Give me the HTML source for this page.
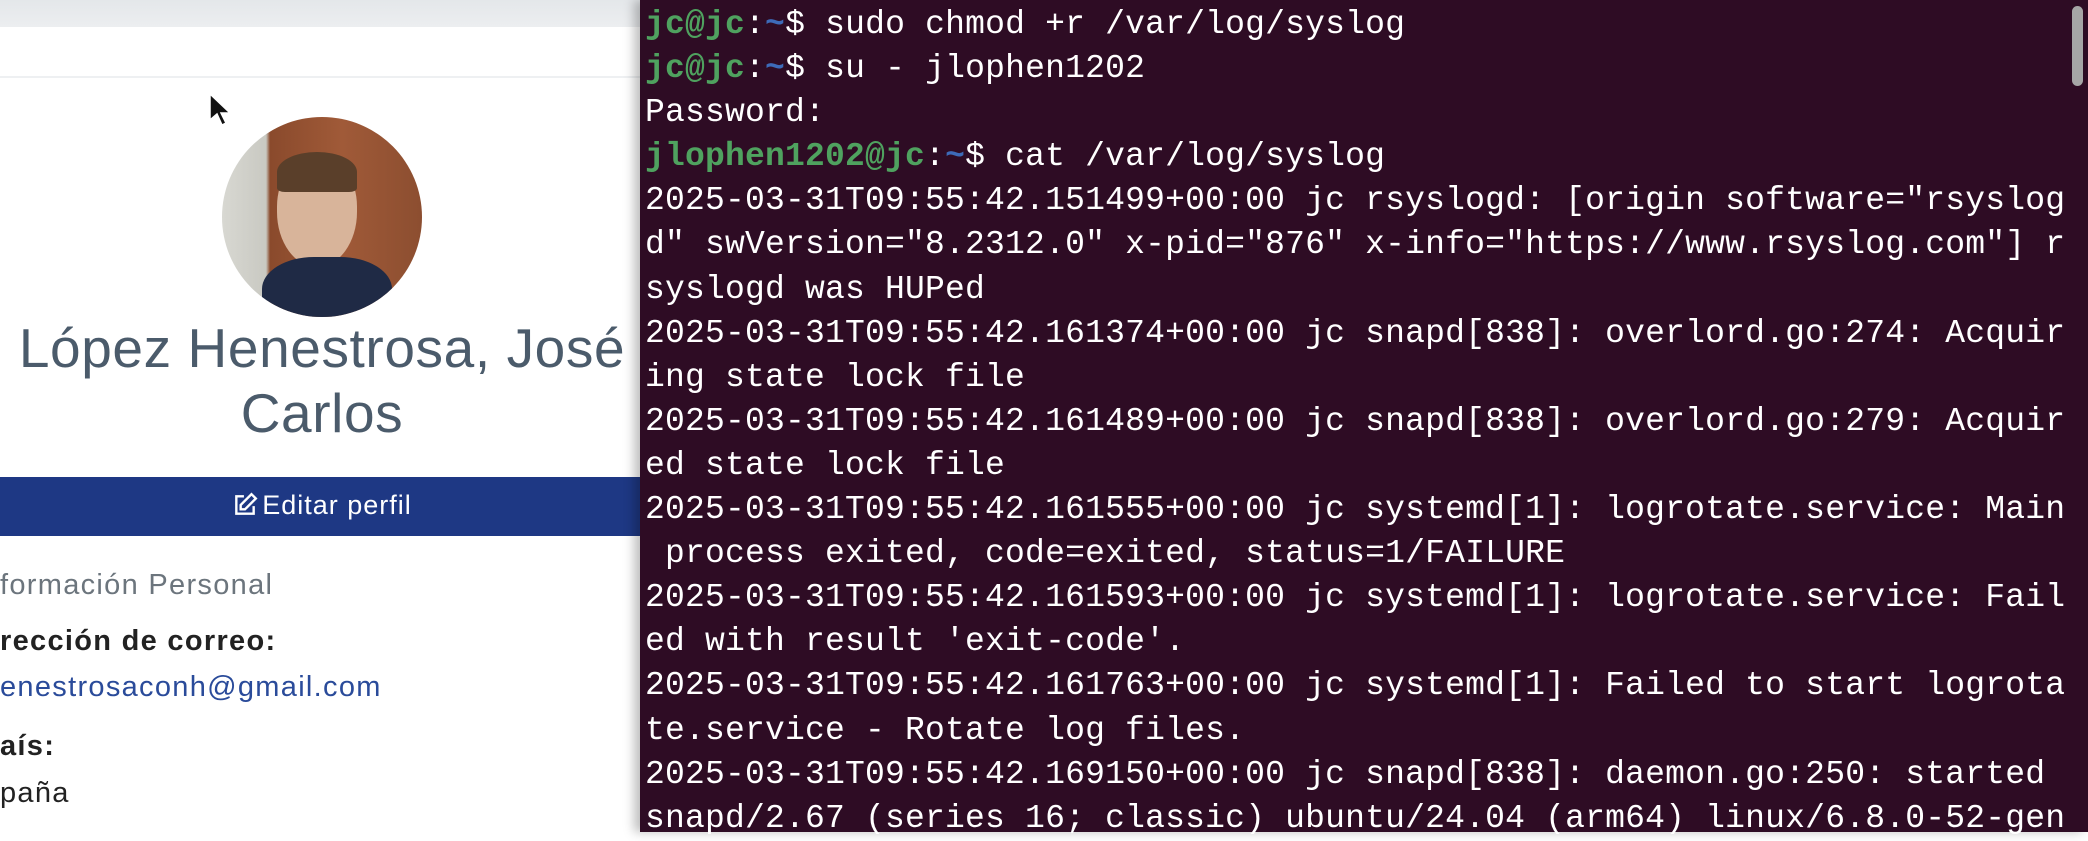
<!DOCTYPE html>
<html><head><meta charset="utf-8"><style>
body{margin:0;width:2088px;height:832px;overflow:hidden;background:#fff;position:relative;font-family:"Liberation Sans",sans-serif}
.l{position:absolute;left:0;top:0;width:640px;height:832px;background:#fff;overflow:hidden}
.tb{position:absolute;left:0;top:0;width:640px;height:27px;background:linear-gradient(#e4e7ea,#eceef0)}
.hr{position:absolute;left:0;top:76px;width:640px;height:2px;background:#eef0f2}
.av{position:absolute;left:222px;top:117px;width:200px;height:200px;border-radius:50%;overflow:hidden;background:linear-gradient(90deg,#d8d8d2 0,#c9c9c2 22%,#8a4a2c 24%,#a05a38 60%,#8c4e30 100%)}
.t{position:absolute;white-space:nowrap}
.s{font-size:29px;letter-spacing:1.3px}
.blue{position:absolute;left:0;top:477px;width:640px;height:59px;background:#1e3884}
.term{position:absolute;left:640px;top:0;width:1448px;height:832px;background:#2e0c24;box-shadow:-6px 0 10px rgba(0,0,0,.25)}
pre{margin:0;position:absolute;left:5px;top:3px;font-family:"Liberation Mono","DejaVu Sans Mono",monospace;font-size:33px;line-height:44.1px;letter-spacing:0.2px;color:#fff}
.g{color:#4fa25f;font-weight:bold}.b{color:#3d6bb8;font-weight:bold}
.sb{position:absolute;left:1432px;top:6px;width:11px;height:80px;border-radius:6px;background:#a6a6a6}
</style></head><body>
<div class="l">
<div class="tb"></div><div class="hr"></div>
<div class="av">
 <div style="position:absolute;left:55px;top:40px;width:80px;height:110px;border-radius:45% 45% 50% 50%;background:#d8b49a"></div>
 <div style="position:absolute;left:55px;top:35px;width:80px;height:40px;border-radius:50% 50% 10% 10%;background:#5a3f2a"></div>
 <div style="position:absolute;left:40px;top:140px;width:130px;height:80px;border-radius:40% 40% 0 0;background:#1f2a45"></div>
</div>
<div class="t" style="left:0;width:644px;text-align:center;top:316px;font-size:55px;letter-spacing:0.6px;color:#4b5b6b">López Henestrosa, José</div>
<div class="t" style="left:0;width:644px;text-align:center;top:381px;font-size:55px;letter-spacing:0.6px;color:#4b5b6b">Carlos</div>
<div class="blue"></div>
<div class="t" style="left:0;width:644px;text-align:center;top:490px;font-size:27px;letter-spacing:1px;color:#fff"><svg width="26" height="26" viewBox="0 0 24 24" style="vertical-align:-4px;margin-right:4px" fill="none" stroke="#fff" stroke-width="2.2"><path d="M11 4H4v16h16v-7"/><path d="M18 2l4 4-10 10H8v-4z"/></svg>Editar perfil</div>
<div class="t s" style="left:0;top:569px;color:#6c757d">formación Personal</div>
<div class="t s" style="left:0;top:625px;color:#222;font-weight:bold">rección de correo:</div>
<div class="t s" style="left:0;top:671px;color:#2a4b9a">enestrosaconh@gmail.com</div>
<div class="t s" style="left:0;top:730px;color:#222;font-weight:bold">aís:</div>
<div class="t s" style="left:0;top:777px;color:#222">paña</div>
<svg style="position:absolute;left:208px;top:92px" width="24" height="36" viewBox="0 0 24 36"><path d="M2 2v26l7-6 5 11 4-2-5-10h9z" fill="#111" stroke="#fff" stroke-width="1.5"/></svg>
</div>
<div class="term"><div class="sb"></div>
<pre><span class="g">jc@jc</span>:<span class="b">~</span>$ sudo chmod +r /var/log/syslog
<span class="g">jc@jc</span>:<span class="b">~</span>$ su - jlophen1202
Password:
<span class="g">jlophen1202@jc</span>:<span class="b">~</span>$ cat /var/log/syslog
2025-03-31T09:55:42.151499+00:00 jc rsyslogd: [origin software="rsyslog
d" swVersion="8.2312.0" x-pid="876" x-info="https://www.rsyslog.com"] r
syslogd was HUPed
2025-03-31T09:55:42.161374+00:00 jc snapd[838]: overlord.go:274: Acquir
ing state lock file
2025-03-31T09:55:42.161489+00:00 jc snapd[838]: overlord.go:279: Acquir
ed state lock file
2025-03-31T09:55:42.161555+00:00 jc systemd[1]: logrotate.service: Main
 process exited, code=exited, status=1/FAILURE
2025-03-31T09:55:42.161593+00:00 jc systemd[1]: logrotate.service: Fail
ed with result 'exit-code'.
2025-03-31T09:55:42.161763+00:00 jc systemd[1]: Failed to start logrota
te.service - Rotate log files.
2025-03-31T09:55:42.169150+00:00 jc snapd[838]: daemon.go:250: started
snapd/2.67 (series 16; classic) ubuntu/24.04 (arm64) linux/6.8.0-52-gen</pre>
</div>
</body></html>
